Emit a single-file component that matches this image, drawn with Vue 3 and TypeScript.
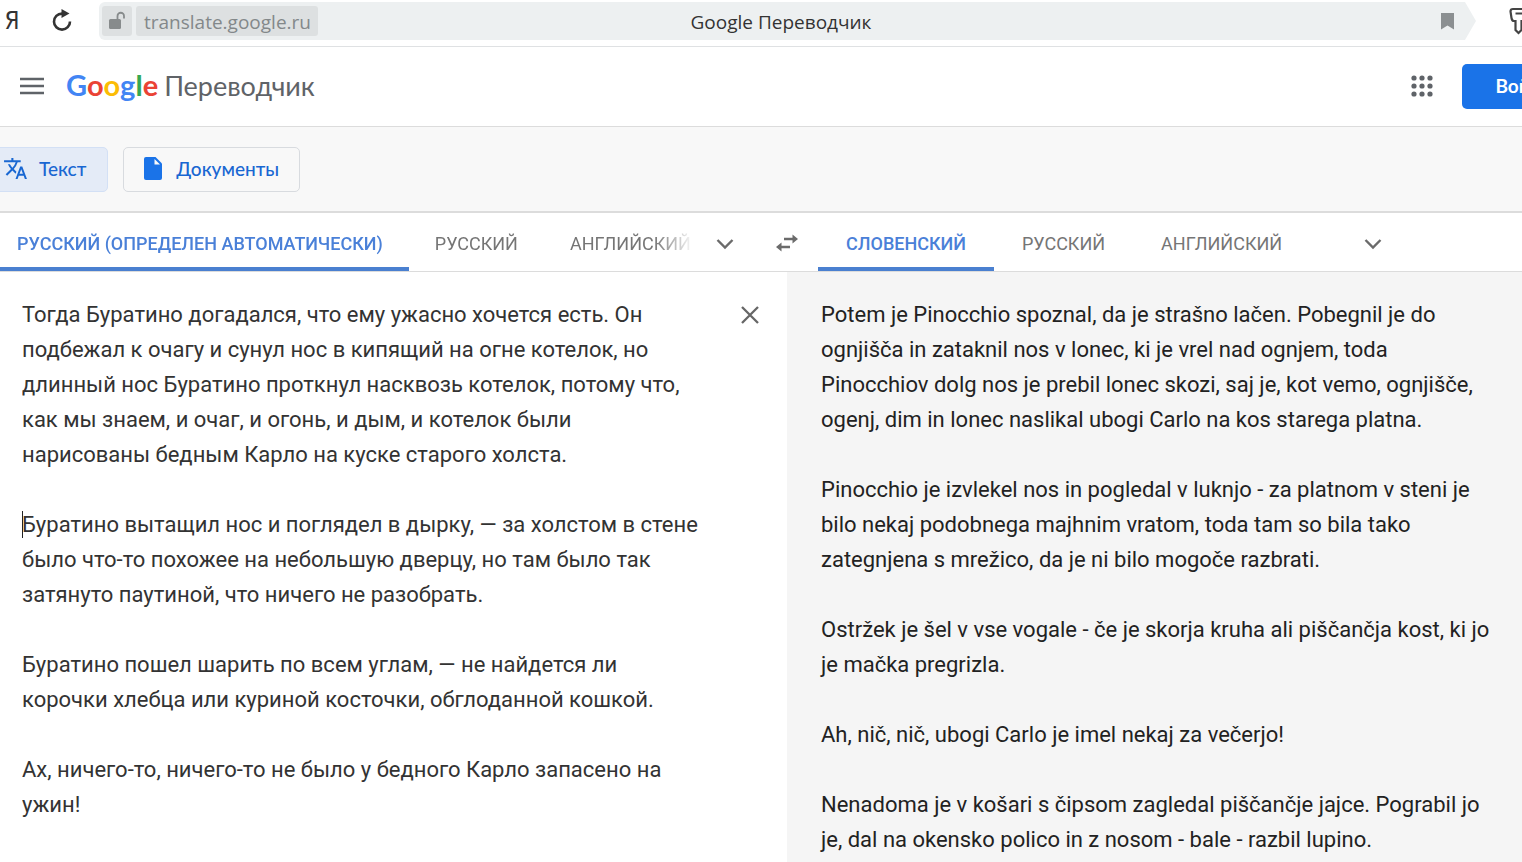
<script setup lang="ts">
import { ref } from 'vue'

interface Tab {
  id: string
  label: string
}

const sourceTabs: Tab[] = [
  { id: 'auto', label: 'РУССКИЙ (ОПРЕДЕЛЕН АВТОМАТИЧЕСКИ)' },
  { id: 'ru', label: 'РУССКИЙ' },
  { id: 'en', label: 'АНГЛИЙСКИЙ' },
]
const targetTabs: Tab[] = [
  { id: 'sl', label: 'СЛОВЕНСКИЙ' },
  { id: 'ru', label: 'РУССКИЙ' },
  { id: 'en', label: 'АНГЛИЙСКИЙ' },
]
const sourceLang = ref('auto')
const targetLang = ref('sl')

const sourceText = ref(
  [
    'Тогда Буратино догадался, что ему ужасно хочется есть. Он подбежал к очагу и сунул нос в кипящий на огне котелок, но длинный нос Буратино проткнул насквозь котелок, потому что, как мы знаем, и очаг, и огонь, и дым, и котелок были нарисованы бедным Карло на куске старого холста.',
    'Буратино вытащил нос и поглядел в дырку, — за холстом в стене было что-то похожее на небольшую дверцу, но там было так затянуто паутиной, что ничего не разобрать.',
    'Буратино пошел шарить по всем углам, — не найдется ли корочки хлебца или куриной косточки, обглоданной кошкой.',
    'Ах, ничего-то, ничего-то не было у бедного Карло запасено на ужин!',
  ].join('\n\n'),
)

const translation: string[] = [
  'Potem je Pinocchio spoznal, da je strašno lačen. Pobegnil je do ognjišča in zataknil nos v lonec, ki je vrel nad ognjem, toda Pinocchiov dolg nos je prebil lonec skozi, saj je, kot vemo, ognjišče, ogenj, dim in lonec naslikal ubogi Carlo na kos starega platna.',
  'Pinocchio je izvlekel nos in pogledal v luknjo - za platnom v steni je bilo nekaj podobnega majhnim vratom, toda tam so bila tako zategnjena s mrežico, da je ni bilo mogoče razbrati.',
  'Ostržek je šel v vse vogale - če je skorja kruha ali piščančja kost, ki jo je mačka pregrizla.',
  'Ah, nič, nič, ubogi Carlo je imel nekaj za večerjo!',
  'Nenadoma je v košari s čipsom zagledal piščančje jajce. Pograbil jo je, dal na okensko polico in z nosom - bale - razbil lupino.',
]

const logo = [
  { ch: 'G', cls: 'blue' },
  { ch: 'o', cls: 'red' },
  { ch: 'o', cls: 'yellow' },
  { ch: 'g', cls: 'blue' },
  { ch: 'l', cls: 'green' },
  { ch: 'e', cls: 'red' },
]
</script>

<template>
  <div class="page">
    <div class="browser">
      <button class="ya" aria-label="Яндекс">Я</button>
      <button class="reload" aria-label="Обновить">
        <svg width="22" height="24" viewBox="0 0 22 24">
          <path d="M12.500 4.600H11A8 8 0 1 0 19 12.500" fill="none" stroke="#333" stroke-width="2.600" />
          <path d="M10.500 0L18.500 4.600L10.500 9Z" fill="#333" />
        </svg>
      </button>
      <div class="address">
        <button class="lock" aria-label="Соединение не защищено">
          <svg width="20" height="20" viewBox="0 0 20 20">
            <rect x="2" y="8" width="12" height="10" rx="1.500" fill="#878b8c" />
            <path d="M10.500 8V5A3.200 3.200 0 0 1 17 5V7.500" fill="none" stroke="#878b8c" stroke-width="1.800" />
          </svg>
        </button>
        <a class="url" href="#">translate.google.ru</a>
        <span class="title">Google Переводчик</span>
        <button class="mark" aria-label="Закладка">
          <svg width="13" height="17" viewBox="0 0 13 17"><path d="M0 0H13V16.500L6.500 12.500L0 16.500Z" fill="#8b8f91" /></svg>
        </button>
      </div>
      <button class="key" aria-label="Пароли">
        <svg width="24" height="28" viewBox="0 0 24 28">
          <path d="M4 2H18Q20 2 20 4V11Q20 14 17 14H12.500V23L9.500 26L6.500 23V14H5Q3 14 2.500 11L1.500 4.500Q1.500 2 4 2Z" fill="none" stroke="#444" stroke-width="2.200" />
          <path d="M6.500 6.500H14" stroke="#444" stroke-width="2" />
        </svg>
      </button>
    </div>

    <header class="header">
      <button class="menu" aria-label="Главное меню">
        <svg width="24" height="18" viewBox="0 0 24 18"><path d="M0 2H24M0 9H24M0 16H24" stroke="#5f6368" stroke-width="2.300" /></svg>
      </button>
      <a class="brand" href="#">
        <span class="google"><span v-for="(l, i) in logo" :key="i" :class="l.cls">{{ l.ch }}</span></span>
        <span class="product">Переводчик</span>
      </a>
      <button class="apps" aria-label="Приложения Google">
        <svg width="22" height="22" viewBox="0 0 22 22" fill="#5f6368">
          <template v-for="r in 3" :key="r">
            <circle v-for="c in 3" :key="c" :cx="c * 8 - 5" :cy="r * 8 - 5" r="2.600" />
          </template>
        </svg>
      </button>
      <button class="signin">Войти</button>
    </header>

    <nav class="modes">
      <button class="mode active">
        <svg width="25" height="25" viewBox="0 0 24 24"><path fill="#1967d2" d="M12.870 15.070l-2.540-2.510.03-.03A17.520 17.520 0 0 0 14.070 6H17V4h-7V2H8v2H1v1.990h11.170C11.500 7.920 10.440 9.750 9 11.350 8.070 10.320 7.300 9.190 6.690 8h-2c.73 1.630 1.730 3.170 2.980 4.560l-5.090 5.020L4 19l5-5 3.110 3.110.76-2.040zM18.500 10h-2L12 22h2l1.120-3h4.750L21 22h2l-4.500-12zm-2.620 7l1.620-4.330L19.120 17h-3.240z" /></svg>
        Текст
      </button>
      <button class="mode">
        <svg width="18" height="23" viewBox="0 0 18 23"><path fill="#1a73e8" d="M2 0H11.500L18 6.500V21Q18 23 16 23H2Q0 23 0 21V2Q0 0 2 0Z" /><path fill="#fafafa" d="M10.500 2L16 7.500H10.500Z" /></svg>
        Документы
      </button>
    </nav>

    <main class="translator">
      <div class="langs">
        <div class="side">
          <div class="tabs fade">
            <button v-for="t in sourceTabs" :key="t.id" class="tab" :class="{ on: t.id === sourceLang }" @click="sourceLang = t.id">{{ t.label }}</button>
          </div>
          <button class="more" aria-label="Другие языки оригинала">
            <svg width="18" height="12" viewBox="0 0 18 12"><path d="M1.500 2L9 9.500L16.500 2" fill="none" stroke="#6b6b6b" stroke-width="2.400" /></svg>
          </button>
        </div>
        <button class="swap" aria-label="Поменять языки">
          <svg width="22" height="18" viewBox="0 0 22 18">
            <path d="M8 5H17M14 13H5" stroke="#6b6b6b" stroke-width="2.400" />
            <path d="M16.500 0.500L22 5L16.500 9.500ZM5.500 8.500L0 13L5.500 17.500Z" fill="#6b6b6b" />
          </svg>
        </button>
        <div class="side">
          <div class="tabs">
            <button v-for="t in targetTabs" :key="t.id" class="tab" :class="{ on: t.id === targetLang }" @click="targetLang = t.id">{{ t.label }}</button>
          </div>
          <button class="more far" aria-label="Другие языки перевода">
            <svg width="18" height="12" viewBox="0 0 18 12"><path d="M1.500 2L9 9.500L16.500 2" fill="none" stroke="#6b6b6b" stroke-width="2.400" /></svg>
          </button>
        </div>
      </div>

      <div class="panels">
        <section class="source">
          <div class="field">
            <textarea v-model="sourceText" rows="16" spellcheck="false" aria-label="Исходный текст"></textarea>
            <span class="caret"></span>
          </div>
          <button class="clear" aria-label="Удалить исходный текст" @click="sourceText = ''">
            <svg width="18" height="18" viewBox="0 0 18 18"><path d="M1 1L17 17M17 1L1 17" stroke="#666" stroke-width="2.300" /></svg>
          </button>
        </section>
        <section class="result" lang="sl">
          <p v-for="(p, i) in translation" :key="i">{{ p }}</p>
        </section>
      </div>
    </main>
  </div>
</template>

<style>
body {
  margin: 0;
  background: #fff;
}
</style>

<style scoped>
.page {
  display: flex;
  flex-direction: column;
  min-height: 100vh;
  overflow: hidden;
  font-family: Roboto, 'Liberation Sans', sans-serif;
  color: #222;
}
* {
  box-sizing: border-box;
}
button {
  display: flex;
  align-items: center;
  justify-content: center;
  flex: none;
  margin: 0;
  padding: 0;
  border: 0;
  background: none;
  font: inherit;
  cursor: pointer;
}
svg {
  display: block;
  flex: none;
}
a {
  text-decoration: none;
}

.browser {
  display: flex;
  align-items: center;
  height: 47px;
  padding-bottom: 4px;
  border-bottom: 1px solid #dfe1e3;
  font-family: 'Open Sans', 'Noto Sans', sans-serif;
  font-size: 19px;
}
.ya {
  width: 24px;
  color: #333;
  font-family: 'DejaVu Sans Condensed', 'DejaVu Sans', sans-serif;
  font-size: 24px;
}
.reload {
  width: 75px;
}
.address {
  display: flex;
  flex: 1;
  align-items: center;
  height: 38px;
  padding: 0 22px 0 3px;
  border-radius: 6px 0 0 6px;
  background: #edf0f1;
  clip-path: polygon(0 0, calc(100% - 11px) 0, 100% 50%, calc(100% - 11px) 100%, 0 100%);
}
.lock,
.url {
  height: 30px;
  border-radius: 3px;
  background: #dde0e1;
}
.lock {
  width: 30px;
}
.url {
  margin-left: 4px;
  padding: 1px 7px 0 8px;
  color: #83888a;
  line-height: 30px;
}
.title {
  flex: 1;
  padding: 1px 197px 0 0;
  color: #333;
  text-align: center;
}
.key {
  margin: 0 -11px 0 33px;
}

.header {
  display: flex;
  align-items: center;
  height: 80px;
  padding-bottom: 1px;
  border-bottom: 1px solid #dcdcdc;
}
.menu {
  width: 64px;
}
.brand {
  display: flex;
  flex: 1;
  align-items: baseline;
  gap: 6px;
  padding: 0 0 3px 2px;
  color: #5f6368;
}
.google {
  font-family: Lato, sans-serif;
  font-size: 29px;
  font-weight: 700;
}
.product {
  font-family: Lato, sans-serif;
  font-size: 27px;
}
.blue {
  color: #4285f4;
}
.red {
  color: #ea4335;
}
.yellow {
  color: #fbbc05;
}
.green {
  color: #34a853;
}
.apps {
  margin-right: 29px;
}
.signin {
  width: 122px;
  height: 45px;
  margin-right: -62px;
  padding-bottom: 2px;
  border-radius: 5px;
  background: #1a73e8;
  color: #fff;
  font-family: Lato, sans-serif;
  font-size: 19px;
  font-weight: 700;
}

.modes {
  display: flex;
  align-items: center;
  gap: 15px;
  height: 84px;
  background: #f8f8f8;
}
.mode {
  gap: 14px;
  height: 45px;
  padding: 0 20px 1px;
  border: 1px solid #d8dbdf;
  border-radius: 5px;
  color: #1967d2;
  font-family: Lato, sans-serif;
  font-size: 19px;
  font-weight: 500;
}
.mode.active {
  gap: 11px;
  margin-left: -18px;
  padding-right: 21px;
  border-color: #d3e0f5;
  background: #e4ebf7;
}

.translator {
  display: flex;
  flex: 1;
  flex-direction: column;
  border-top: 2px solid #dcdcdc;
  background: #fff;
}
.langs {
  display: grid;
  grid-template-columns: 756fr 62px 704fr;
  height: 59px;
  border-bottom: 1px solid #dcdcdc;
}
.side {
  display: flex;
  min-width: 0;
}
.tabs {
  display: flex;
  flex: 1;
  min-width: 0;
  overflow: hidden;
}
.fade {
  mask-image: linear-gradient(to right, #000 calc(100% - 40px), transparent);
}
.tab {
  padding: 6px 28px 0;
  border-bottom: 4px solid transparent;
  color: #757575;
  font-size: 18px;
}
.fade .tab {
  padding-right: 26px;
  padding-left: 26px;
}
.fade .tab:first-child {
  padding-left: 17px;
}
.tab.on {
  border-bottom-color: #4a80d0;
  color: #4a80d8;
  font-weight: 500;
}
.more {
  width: 62px;
  padding-top: 4px;
}
.swap {
  padding-top: 2px;
}
.far {
  margin-right: 118px;
}

.panels {
  display: grid;
  flex: 1;
  grid-template-columns: 787fr 735fr;
  font-size: 22px;
  line-height: 35px;
}
.source {
  display: flex;
  align-items: flex-start;
  padding: 25px 28px 0 22px;
}
.field {
  position: relative;
  flex: 1;
  min-width: 0;
}
textarea {
  display: block;
  width: 100%;
  padding: 0;
  border: 0;
  outline: 0;
  overflow: hidden;
  resize: none;
  background: none;
  color: #333;
  font: inherit;
}
.caret {
  position: absolute;
  top: 214px;
  left: 0;
  width: 1px;
  height: 27px;
  background: #222;
}
.clear {
  width: 18px;
  height: 35px;
  margin-left: 38px;
}
.result {
  padding: 25px 22px 5px 34px;
  background: #f5f5f5;
}
.result p {
  margin: 0 0 35px;
}
.result p:last-child {
  margin-bottom: 0;
}
</style>
